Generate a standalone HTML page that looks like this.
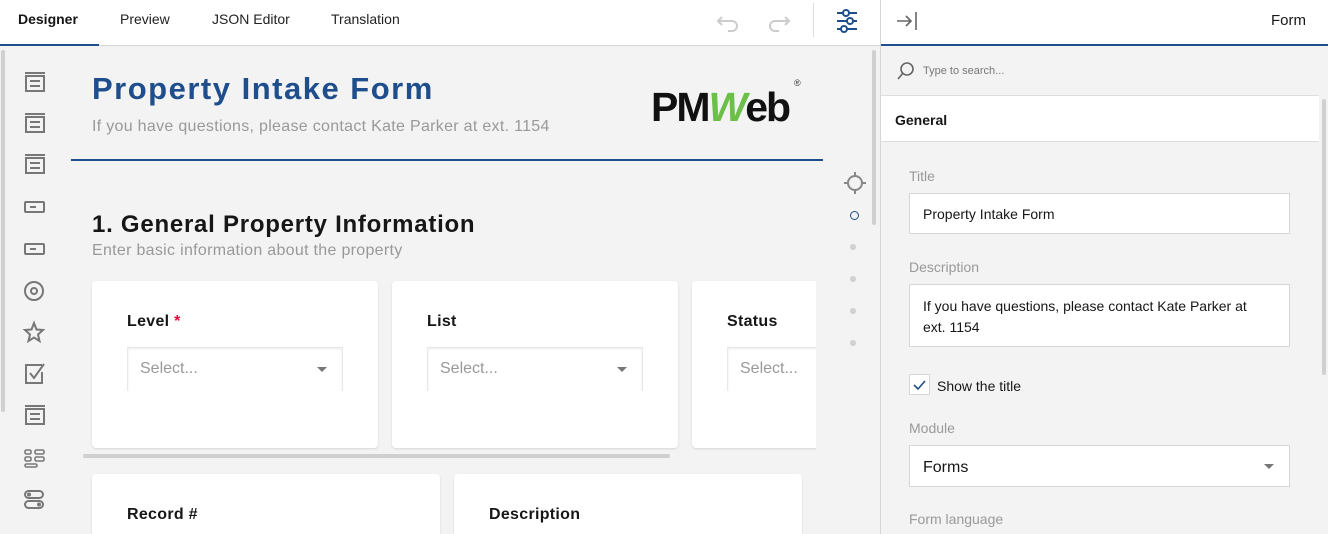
<!DOCTYPE html>
<html><head><style>
*{box-sizing:border-box;margin:0;padding:0}
body{width:1328px;height:534px;overflow:hidden;background:#f3f3f3;font-family:"Liberation Sans","DejaVu Sans",sans-serif;position:relative;color:#161616}
.a{position:absolute}
.tab{position:absolute;top:11px;font-size:14px;color:#222}
.card{position:absolute;background:#fff;border-radius:4px;box-shadow:0 1px 2px rgba(0,0,0,.12)}
.lbl{position:absolute;font-size:16px;font-weight:bold;color:#161616;letter-spacing:.3px}
.sel{position:absolute;height:44px;background:#fff;border:1px solid #e8e8e8;border-bottom:none;box-shadow:inset 0 1px 2px rgba(0,0,0,.08);font-size:16px;color:#999;padding:12px 12px}
.caret{position:absolute;width:0;height:0;border-left:5px solid transparent;border-right:5px solid transparent;border-top:5px solid #777}
.dot{position:absolute;width:6px;height:6px;border-radius:3px;background:#d0d0d0;left:850px}
.rl{position:absolute;left:909px;font-size:14px;color:#999}
.inp{position:absolute;left:909px;width:381px;background:#fff;border:1px solid #d6d6d6;font-size:14px;padding:0 13px;color:#161616}
</style></head><body>
<div class="a" style="left:0;top:0;width:880px;height:46px;background:#fff;border-bottom:1px solid #d6d6d6"></div>
<div class="a" style="left:0;top:44px;width:99px;height:2px;background:#1f4e8c"></div>
<div class="tab" style="left:18px;font-weight:bold;color:#161616">Designer</div>
<div class="tab" style="left:120px">Preview</div>
<div class="tab" style="left:212px">JSON Editor</div>
<div class="tab" style="left:331px">Translation</div>
<svg class="a" style="left:714px;top:8px" width="28" height="28" viewBox="0 0 28 28" fill="none" stroke="#ccc" stroke-width="2"><path d="M8 9 L4 13 L8 17 M4 13 H18 a5 5 0 0 1 0 10 H14"/></svg>
<svg class="a" style="left:765px;top:8px" width="28" height="28" viewBox="0 0 28 28" fill="none" stroke="#ccc" stroke-width="2"><path d="M20 9 L24 13 L20 17 M24 13 H10 a5 5 0 0 0 0 10 H14"/></svg>
<div class="a" style="left:813px;top:3px;width:1px;height:34px;background:#ddd"></div>
<svg class="a" style="left:834px;top:8px" width="26" height="26" viewBox="0 0 26 26" fill="none" stroke="#1f4e8c" stroke-width="2"><path d="M3 5H9M15 5H23M3 13H13M19 13H23M3 21H7M13 21H23"/><circle cx="12" cy="5" r="3"/><circle cx="16" cy="13" r="3"/><circle cx="10" cy="21" r="3"/></svg>
<div class="a" style="left:1px;top:50px;width:4px;height:362px;background:#d0d0d0;border-radius:2px"></div>
<svg class="a" style="left:22px;top:70px" width="26" height="464" fill="none" stroke="#777" stroke-width="2">
<g><rect x="4" y="6" width="18" height="15"/><path d="M3 3H23M8 11H18M8 16H18"/></g>
<g transform="translate(0,41)"><rect x="4" y="6" width="18" height="15"/><path d="M3 3H23M8 11H18M8 16H18"/></g>
<g transform="translate(0,82)"><rect x="4" y="6" width="18" height="15"/><path d="M3 3H23M8 11H18M8 16H18"/></g>
<g transform="translate(0,124)"><rect x="3" y="8" width="19" height="10" rx="1"/><path d="M8 13H14"/></g>
<g transform="translate(0,166)"><rect x="3" y="8" width="19" height="10" rx="1"/><path d="M8 13H14"/></g>
<circle cx="12" cy="221" r="9"/><circle cx="12" cy="221" r="3"/>
<path d="M12 253 L14.5 259.5 L21 260 L16 264.5 L17.5 271 L12 267.5 L6.5 271 L8 264.5 L3 260 L9.5 259.5Z"/>
<g transform="translate(0,290)"><path d="M20 5H4V23H20V12"/><path d="M8 13L12 18L22 4"/></g>
<g transform="translate(0,333)"><rect x="4" y="6" width="18" height="15"/><path d="M3 3H23M8 11H18M8 16H18"/></g>
<g transform="translate(0,375)" stroke-width="1.6"><rect x="3" y="5" width="6" height="4" rx="1.5"/><rect x="13" y="5" width="9" height="4" rx="1.5"/><rect x="3" y="12" width="6" height="4" rx="1.5"/><rect x="13" y="12" width="9" height="4" rx="1.5"/><rect x="3" y="19" width="12" height="3" rx="1.5"/></g>
<g transform="translate(0,416)"><rect x="3" y="5" width="18" height="7" rx="3.5"/><rect x="3" y="15" width="18" height="7" rx="3.5"/><circle cx="7" cy="8.5" r="1"/><circle cx="17" cy="18.5" r="1"/></g>
</svg>
<div class="a" style="left:92px;top:71px;font-size:31px;font-weight:bold;color:#1f4e8c;letter-spacing:1.5px">Property Intake Form</div>
<div class="a" style="left:92px;top:118px;font-size:16px;color:#999;letter-spacing:.3px">If you have questions, please contact Kate Parker at ext. 1154</div>
<div class="a" style="left:651px;top:84px;font-size:41px;font-weight:900;letter-spacing:-2px;color:#111">PM<span style="color:#6cc04a;font-style:italic">W</span>eb</div>
<div class="a" style="left:794px;top:78px;font-size:9px;color:#333">®</div>
<div class="a" style="left:71px;top:159px;width:752px;height:2px;background:#1f4e8c"></div>
<div class="a" style="left:92px;top:211px;font-size:24px;font-weight:bold;letter-spacing:.75px">1. General Property Information</div>
<div class="a" style="left:92px;top:242px;font-size:16px;color:#999;letter-spacing:.3px">Enter basic information about the property</div>
<div class="a" style="left:0;top:0;width:816px;height:534px;overflow:hidden">
<div class="card" style="left:92px;top:281px;width:286px;height:167px"></div>
<div class="card" style="left:392px;top:281px;width:286px;height:167px"></div>
<div class="card" style="left:692px;top:281px;width:286px;height:167px"></div>
<div class="lbl" style="left:127px;top:313px">Level <span style="color:#e50a3e">*</span></div>
<div class="lbl" style="left:427px;top:313px">List</div>
<div class="lbl" style="left:727px;top:313px">Status</div>
<div class="sel" style="left:127px;top:347px;width:216px">Select...</div><div class="caret" style="left:317px;top:367px"></div>
<div class="sel" style="left:427px;top:347px;width:216px">Select...</div><div class="caret" style="left:617px;top:367px"></div>
<div class="sel" style="left:727px;top:347px;width:216px">Select...</div>
<div class="card" style="left:92px;top:474px;width:348px;height:80px"></div>
<div class="card" style="left:454px;top:474px;width:348px;height:80px"></div>
<div class="lbl" style="left:127px;top:506px">Record #</div>
<div class="lbl" style="left:489px;top:506px">Description</div>
</div>
<div class="a" style="left:83px;top:454px;width:587px;height:4px;background:#d0d0d0;border-radius:2px"></div>
<svg class="a" style="left:843px;top:171px" width="24" height="24" fill="none" stroke="#888" stroke-width="2"><circle cx="12" cy="12" r="7"/><path d="M12 1V5M12 19V23M1 12H5M19 12H23"/></svg>
<div class="a" style="left:850px;top:211px;width:9px;height:9px;border:1.5px solid #1f4e8c;border-radius:50%"></div>
<div class="dot" style="top:244px"></div><div class="dot" style="top:276px"></div><div class="dot" style="top:308px"></div><div class="dot" style="top:340px"></div>
<div class="a" style="left:872px;top:50px;width:4px;height:175px;background:#d0d0d0;border-radius:2px"></div>
<div class="a" style="left:880px;top:0;width:448px;height:534px;background:#f3f3f3;border-left:1px solid #d6d6d6"></div>
<div class="a" style="left:881px;top:0;width:447px;height:44px;background:#fff"></div>
<div class="a" style="left:881px;top:44px;width:447px;height:2px;background:#1f4e8c"></div>
<svg class="a" style="left:895px;top:10px" width="24" height="22" fill="none" stroke="#666" stroke-width="1.6"><path d="M2 11H16M11 6L16 11L11 16M21 2V20"/></svg>
<div class="a" style="left:1271px;top:12px;font-size:15px">Form</div>
<svg class="a" style="left:896px;top:61px" width="20" height="20" fill="none" stroke="#666" stroke-width="1.6"><circle cx="11" cy="8" r="6"/><path d="M7 12L2 18"/></svg>
<div class="a" style="left:923px;top:65px;font-size:11px;color:#777">Type to search...</div>
<div class="a" style="left:881px;top:95px;width:438px;height:47px;background:#fff;border-top:1px solid #ddd;border-bottom:1px solid #ddd"></div>
<div class="a" style="left:895px;top:112px;font-size:14px;font-weight:bold">General</div>
<div class="a" style="left:1322px;top:99px;width:4px;height:276px;background:#d0d0d0;border-radius:2px"></div>
<div class="rl" style="top:168px">Title</div>
<div class="inp" style="top:193px;height:41px;line-height:41px">Property Intake Form</div>
<div class="rl" style="top:259px">Description</div>
<div class="inp" style="top:284px;height:63px;padding-top:11px;line-height:21px">If you have questions, please contact Kate Parker at<br>ext. 1154</div>
<div class="a" style="left:909px;top:374px;width:21px;height:21px;background:#fff;border:1px solid #d6d6d6"></div>
<svg class="a" style="left:912px;top:378px" width="15" height="13" fill="none" stroke="#1f4e8c" stroke-width="1.6"><path d="M2 7L6 11L13 3"/></svg>
<div class="a" style="left:937px;top:378px;font-size:14px">Show the title</div>
<div class="rl" style="top:420px">Module</div>
<div class="inp" style="top:445px;height:42px;line-height:44px;font-size:16px">Forms</div>
<div class="caret" style="left:1264px;top:464px"></div>
<div class="rl" style="top:511px">Form language</div>
</body></html>
